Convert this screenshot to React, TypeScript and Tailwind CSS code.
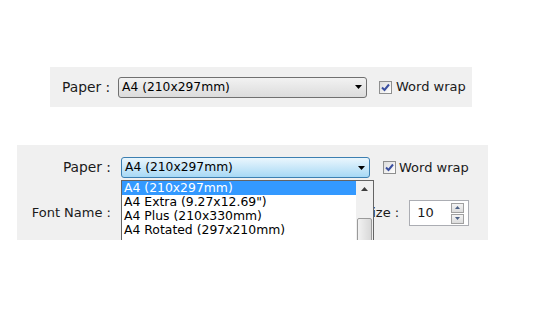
import React from "react";

const font = { fontFamily: '"DejaVu Sans", Verdana, sans-serif' };

function Arrow() {
  return (
    <svg width="7" height="4" viewBox="0 0 7 4" className="shrink-0">
      <path d="M0 0H7L3.5 4Z" fill="#000" />
    </svg>
  );
}

function Check() {
  return (
    <div className="w-[13px] h-[13px] border border-[#8e8f8f] bg-gradient-to-br from-[#dcdcdc] to-[#ffffff] flex items-center justify-center">
      <svg width="9" height="9" viewBox="0 0 9 9">
        <path d="M1 4.5L3.5 7L8 1.5" stroke="#3a4fa0" strokeWidth="2" fill="none" />
      </svg>
    </div>
  );
}

type SelectProps = { value: string; focused?: boolean };

function Select({ value, focused = false }: SelectProps) {
  return (
    <div
      className={
        "w-[249px] h-[21px] rounded-[3px] border flex items-center pl-[3px] pr-[4px] text-[12.3px] text-black " +
        (focused
          ? "border-[#3c7fb1] bg-gradient-to-b from-[#eaf6fd] to-[#a7d9f5]"
          : "border-[#707070] bg-gradient-to-b from-[#f2f2f2] to-[#dcdcdc]")
      }
    >
      <span className="flex-1 leading-none">{value}</span>
      <Arrow />
    </div>
  );
}

const options = [
  "A4 (210x297mm)",
  'A4 Extra (9.27x12.69")',
  "A4 Plus (210x330mm)",
  "A4 Rotated (297x210mm)",
];

export default function App() {
  return (
    <div className="w-[537px] h-[313px] bg-white text-[13px] text-[#1a1a1a]" style={font}>
      {/* Closed combo */}
      <div className="pt-[67px] pl-[50px]">
        <div className="w-[422px] h-[40px] bg-[#f0f0f0] flex items-center">
          <span className="pl-[12px] w-[68px] text-[13.8px]">Paper :</span>
          <Select value="A4 (210x297mm)" />
          <div className="ml-[12px]"><Check /></div>
          <span className="ml-[4px]">Word wrap</span>
        </div>
      </div>

      {/* Open combo */}
      <div className="pt-[38px] pl-[17px]">
        <div className="relative w-[471px] h-[95px] bg-[#f0f0f0] overflow-hidden">
          <div className="flex items-center pt-[12px]">
            <span className="w-[94px] text-right text-[13.8px]">Paper :</span>
            <div className="ml-[10px]"><Select value="A4 (210x297mm)" focused /></div>
            <div className="ml-[13px]"><Check /></div>
            <span className="ml-[3px]">Word wrap</span>
          </div>
          <div className="flex items-center mt-[22px]">
            <span className="w-[94px] text-right">Font Name :</span>
            <span className="ml-[253px]">Size :</span>
            <div className="ml-[10px] w-[60px] h-[26px] bg-white border border-[#abadb3] flex items-center pl-[7px] pr-[4px]">
              <span className="flex-1">10</span>
              <div className="flex flex-col gap-[1px]">
                <div className="w-[13px] h-[10px] border border-[#a0a0a0] bg-gradient-to-b from-[#f4f4f4] to-[#dcdcdc] flex items-center justify-center">
                  <svg width="5" height="3" viewBox="0 0 5 3"><path d="M0 3H5L2.5 0Z" fill="#4d6185" /></svg>
                </div>
                <div className="w-[13px] h-[10px] border border-[#a0a0a0] bg-gradient-to-b from-[#f4f4f4] to-[#dcdcdc] flex items-center justify-center">
                  <svg width="5" height="3" viewBox="0 0 5 3"><path d="M0 0H5L2.5 3Z" fill="#4d6185" /></svg>
                </div>
              </div>
            </div>
          </div>

          {/* Drop-down list */}
          <div className="absolute left-[104px] top-[35px] w-[253px] h-[80px] bg-white border border-[#646464] flex">
            <div className="flex-1 flex flex-col text-[12.4px] text-black">
              {options.map((o, i) => (
                <div
                  key={o}
                  className={"h-[14px] pl-[2px] leading-[14px] " + (i === 0 ? "bg-[#3399ff] text-white" : "")}
                >
                  {o}
                </div>
              ))}
            </div>
            <div className="w-[17px] bg-[#f0f0f0] flex flex-col items-center">
              <svg width="7" height="4" viewBox="0 0 7 4" className="mt-[6px]"><path d="M0 4H7L3.5 0Z" fill="#3d3d3d" /></svg>
              <div className="mt-[27px] w-[15px] h-[40px] border border-[#9a9a9a] rounded-[2px] bg-gradient-to-r from-[#f2f2f2] to-[#d8d8d8]" />
            </div>
          </div>
        </div>
      </div>
    </div>
  );
}
